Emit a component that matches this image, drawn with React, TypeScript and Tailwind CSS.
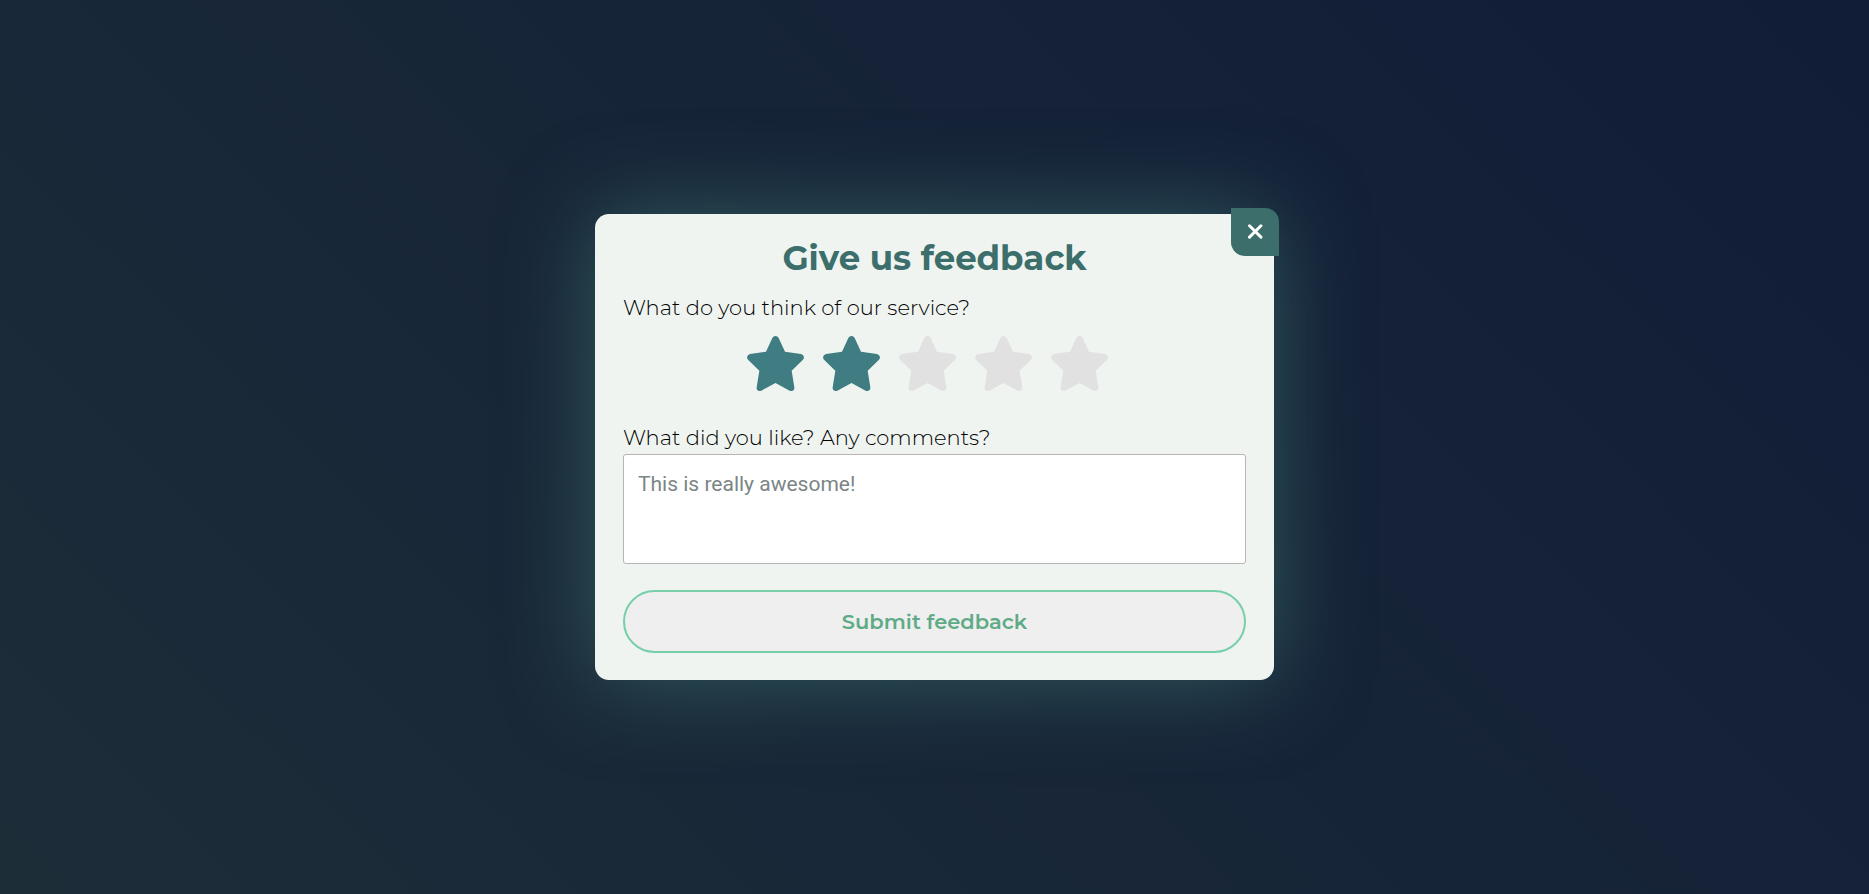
import { useState } from "react";

const STAR_PATH =
  "M110 39Q113 33 119.500 33Q126 33 129 39L148 80L196 87Q204 89 205 97Q205 101 202 104L168 137L176 187Q177 197 168 198Q165 198 162 197L119.500 174L77 197Q74 198 71 198Q62 197 63 187L71 137L37 104Q34 101 34 97Q35 89 43 87L91 80Z";

const STARS = [1, 2, 3, 4, 5];

export default function App() {
  const [rating, setRating] = useState(2);
  const [comment, setComment] = useState("");

  return (
    <main className="flex min-h-screen items-center justify-center bg-linear-45 from-[#1d2d38] to-[#111c37] font-['Montserrat','Inter',sans-serif]">
      <form
        onSubmit={(event) => event.preventDefault()}
        className="relative flex w-full max-w-[679px] flex-col rounded-[14px] bg-[#eff4f0] px-7 pt-6 pb-[27px] shadow-[0_0_88px_#3c6e6cb8]"
      >
        <button
          type="button"
          aria-label="Close"
          className="absolute -top-[6px] -right-[5px] flex size-12 items-center justify-center rounded-tr-[14px] rounded-bl-[14px] bg-[#3c6e6c] text-white"
        >
          <svg viewBox="0 0 14 14" className="size-4" stroke="currentColor" strokeWidth="2.6" strokeLinecap="round">
            <path d="M2.200 1.500l10 10M12.200 1.500L2.200 11.500" />
          </svg>
        </button>
        <h1 className="text-center text-[34px] leading-10 font-bold text-[#3c6e6c]">Give us feedback</h1>
        <fieldset className="mt-4">
          <legend className="text-[21px] leading-7 font-light text-black">What do you think of our service?</legend>
          <div className="mt-[14px] flex justify-center gap-[19px] pr-[14px]">
            {STARS.map((value) => (
              <label key={value} className="cursor-pointer">
                <input
                  type="radio"
                  name="rating"
                  value={value}
                  checked={rating === value}
                  onChange={() => setRating(value)}
                  className="sr-only"
                  aria-label={`${value} stars`}
                />
                <svg
                  viewBox="34 33 171 165"
                  className={value <= rating ? "h-[55px] w-[57px] text-[#3f7d82]" : "h-[55px] w-[57px] text-[#e1e1e1]"}
                >
                  <path d={STAR_PATH} fill="currentColor" />
                </svg>
              </label>
            ))}
          </div>
        </fieldset>
        <label htmlFor="comment" className="mt-[33px] text-[21px] leading-7 font-light text-black">
          What did you like? Any comments?
        </label>
        <textarea
          id="comment"
          value={comment}
          onChange={(event) => setComment(event.target.value)}
          placeholder="This is really awesome!"
          className="mt-0.5 h-[110px] resize-none rounded-[3px] border border-[#b5b5b5] bg-white px-[14px] py-[15px] font-[Roboto,sans-serif] text-[21px] leading-7 text-black placeholder:text-[#7b8585]"
        />
        <button
          type="submit"
          className="mt-[26px] h-[63px] rounded-full border-2 border-[#77cfaa] bg-[#efefef] text-[21px] font-semibold text-[#5fab87]"
        >
          Submit feedback
        </button>
      </form>
    </main>
  );
}
